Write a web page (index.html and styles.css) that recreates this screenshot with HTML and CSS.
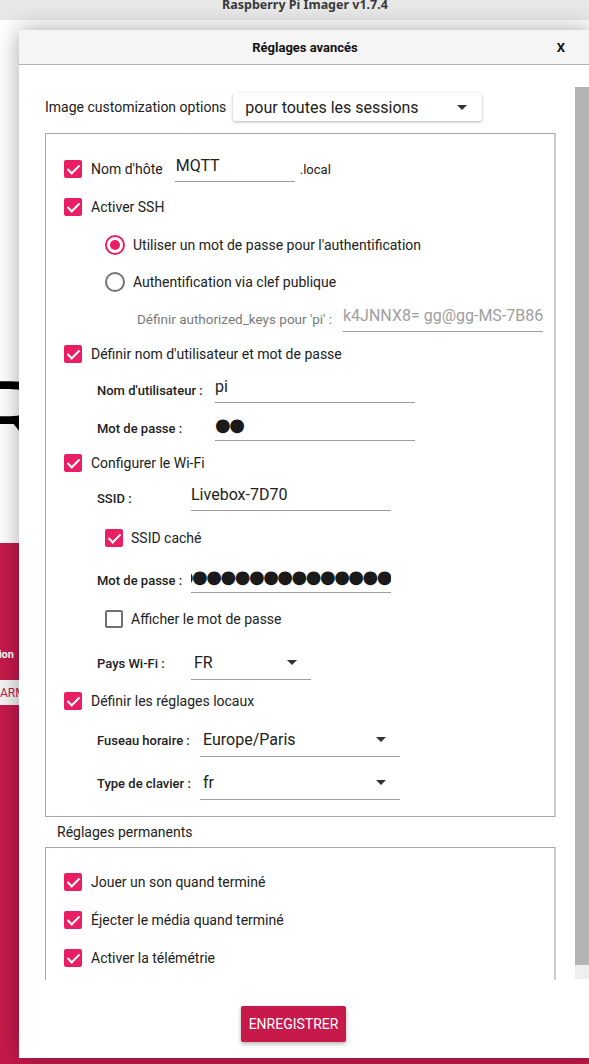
FILE: index.html
```html
<!DOCTYPE html>
<html lang="fr">
<head>
  <meta charset="UTF-8">
  <title>Raspberry Pi Imager v1.7.4</title>
  <meta name="viewport" content="width=device-width, initial-scale=1">
  <link rel="stylesheet" href="styles.css">
</head>
<body>
  <!-- main window, mostly hidden behind the settings dialog -->
  <div class="window">
    <div class="titlebar">Raspberry Pi Imager v1.7.4</div>
    <div class="main-top">
      <div class="logo">R</div>
    </div>
    <div class="main-bottom">
      <div class="step-col">
        <div class="step-label">Version</div>
        <button class="step-btn">ARMHF</button>
      </div>
    </div>
  </div>

  <div class="dialog">
    <div class="dialog-header">
      <span></span>
      <span class="dialog-title">Réglages avancés</span>
      <span class="dialog-close">X</span>
    </div>

    <div class="dialog-body">
      <div class="scroll-content">
        <div class="options-row">
          <span class="text">Image customization options</span>
          <div class="combo raised">
            <span>pour toutes les sessions</span>
            <i class="arrow"></i>
          </div>
        </div>

        <div class="group">
          <div class="row check-row h38">
            <span class="check"></span>
            <span class="text">Nom d'hôte</span>
            <div class="field host">MQTT</div>
            <span class="suffix">.local</span>
          </div>
          <div class="row check-row h38">
            <span class="check"></span>
            <span class="text">Activer SSH</span>
          </div>
          <div class="row radio-row h37">
            <span class="radio on"></span>
            <span class="text">Utiliser un mot de passe pour l'authentification</span>
          </div>
          <div class="row radio-row h38">
            <span class="radio"></span>
            <span class="text">Authentification via clef publique</span>
          </div>
          <div class="row keys-row h36">
            <span class="hint">Définir authorized_keys pour 'pi' :</span>
            <div class="field muted">k4JNNX8= gg@gg-MS-7B86</div>
          </div>

          <div class="row check-row h33">
            <span class="check"></span>
            <span class="text">Définir nom d'utilisateur et mot de passe</span>
          </div>
          <div class="creds">
            <div class="row sub-row h40">
              <span class="sublabel">Nom d'utilisateur :</span>
              <div class="field wide">pi</div>
            </div>
            <div class="row sub-row h36">
              <span class="sublabel">Mot de passe :</span>
              <div class="field wide dots">●●</div>
            </div>
          </div>

          <div class="row check-row h34">
            <span class="check"></span>
            <span class="text">Configurer le Wi-Fi</span>
          </div>
          <div class="wifi">
            <div class="row sub-row h36">
              <span class="sublabel">SSID :</span>
              <div class="field wide">Livebox-7D70</div>
            </div>
            <div class="row sub-check h44">
              <span class="check"></span>
              <span class="text">SSID caché</span>
            </div>
            <div class="row sub-row h40">
              <span class="sublabel">Mot de passe :</span>
              <div class="field wide dots tail"><span>●●●●●●●●●●●●●●●●●●●●●●</span></div>
            </div>
            <div class="row sub-check h38">
              <span class="check off"></span>
              <span class="text">Afficher le mot de passe</span>
            </div>
            <div class="row sub-row h50">
              <span class="sublabel">Pays Wi-Fi :</span>
              <div class="select short"><span>FR</span><i class="arrow"></i></div>
            </div>
          </div>

          <div class="row check-row h26">
            <span class="check"></span>
            <span class="text">Définir les réglages locaux</span>
          </div>
          <div class="locale">
            <div class="row sub-row h52">
              <span class="sublabel">Fuseau horaire :</span>
              <div class="select"><span>Europe/Paris</span><i class="arrow"></i></div>
            </div>
            <div class="row sub-row h34">
              <span class="sublabel">Type de clavier :</span>
              <div class="select"><span>fr</span><i class="arrow"></i></div>
            </div>
          </div>
        </div>

        <div class="section-label">Réglages permanents</div>
        <div class="group permanent">
          <div class="row check-row h38">
            <span class="check"></span>
            <span class="text">Jouer un son quand terminé</span>
          </div>
          <div class="row check-row h38">
            <span class="check"></span>
            <span class="text">Éjecter le média quand terminé</span>
          </div>
          <div class="row check-row h38">
            <span class="check"></span>
            <span class="text">Activer la télémétrie</span>
          </div>
        </div>
      </div>

      <div class="scrollbar">
        <div class="scroll-handle"></div>
        <div class="scroll-track"></div>
      </div>
    </div>

    <div class="dialog-footer">
      <button class="save-btn">ENREGISTRER</button>
    </div>
  </div>
</body>
</html>
```

FILE: styles.css
```css
* {
  box-sizing: border-box;
}

body {
  margin: 0;
  width: 589px;
  height: 1064px;
  overflow: hidden;
  position: relative;
  font-family: Roboto, 'Liberation Sans', sans-serif;
  color: #212121;
  background: #fff;
}

/* main window behind the dialog (wider than the viewport) */
.window {
  width: 610px;
  height: 1064px;
  display: flex;
  flex-direction: column;
}

.titlebar {
  height: 20px;
  background: #e8e8e8;
  color: #3a3a3a;
  font-family: 'Noto Sans', sans-serif;
  font-size: 12.5px;
  font-weight: bold;
  line-height: 10px;
  text-align: center;
}

.main-top {
  height: 523px;
  padding-top: 349px;
  background: #fff;
  overflow: hidden;
}

.logo {
  margin-left: -38px;
  font-size: 100px;
  font-weight: 400;
  line-height: 1;
  color: #000;
  transform: scaleX(1.5);
  transform-origin: left center;
}

.main-bottom {
  flex: 1;
  padding-top: 105px;
  background: #c51a4a;
}

.step-col {
  width: 14px;
  display: flex;
  flex-direction: column;
  align-items: flex-end;
}

.step-label {
  color: #fff;
  font-size: 11px;
  font-weight: bold;
  line-height: 14px;
  white-space: nowrap;
}

.step-btn {
  align-self: flex-start;
  margin: 18px 0 0 -8px;
  height: 25px;
  padding: 0 8px;
  border: none;
  background: #f4f4f4;
  color: #c51a4a;
  font-family: Roboto, sans-serif;
  font-size: 12px;
}

/* settings dialog */
.dialog {
  position: absolute;
  left: 19px;
  top: 30px;
  width: 572px;
  height: 1028px;
  background: #fff;
  box-shadow: 0 0 22px rgba(0, 0, 0, 0.35);
  display: flex;
  flex-direction: column;
}

.dialog-header {
  height: 35px;
  flex: none;
  display: grid;
  grid-template-columns: 1fr auto 1fr;
  align-items: center;
  background: #f5f5f5;
  border-bottom: 1px solid #b4b4b4;
  font-size: 13px;
  font-weight: bold;
  color: #111;
}

.dialog-close {
  justify-self: end;
  margin-right: 26px;
}

.dialog-body {
  height: 915px;
  flex: none;
  display: flex;
}

.scroll-content {
  flex: 1;
  overflow: hidden;
  padding: 28px 19px 0 26px;
}

.scrollbar {
  width: 14px;
  margin-right: 2px;
  padding-top: 22px;
}

.scroll-handle {
  height: 878px;
  background: #b4b4b4;
}

.scroll-track {
  height: 14px;
  background: #efefef;
}

.text {
  font-size: 14px;
  white-space: nowrap;
}

.options-row {
  height: 28px;
  display: flex;
  align-items: center;
  gap: 7px;
}

.combo {
  width: 249px;
  height: 28px;
  display: flex;
  align-items: center;
  justify-content: space-between;
  padding: 0 15px 0 12px;
  font-size: 16px;
}

.combo.raised {
  background: #fff;
  border-radius: 2px;
  box-shadow: 0 1px 3px rgba(0, 0, 0, 0.3);
}

.arrow {
  width: 0;
  height: 0;
  border-left: 5px solid transparent;
  border-right: 5px solid transparent;
  border-top: 5px solid #333;
}

.group {
  margin-top: 12px;
  padding: 16px 0;
  border: 1px solid #a6a6a6;
  border-right: 2px solid #cecece;
}

.group.permanent {
  margin-top: 0;
  padding-top: 15px;
  padding-bottom: 60px;
}

.section-label {
  height: 30px;
  display: flex;
  align-items: center;
  padding-left: 12px;
  font-size: 14px;
}

/* rows */
.row {
  display: flex;
  align-items: center;
}

.h26 { height: 26px; }
.h33 { height: 33px; }
.h34 { height: 34px; }
.h36 { height: 36px; }
.h37 { height: 37px; }
.h38 { height: 38px; }
.h40 { height: 40px; }
.h44 { height: 44px; }
.h50 { height: 50px; }
.h52 { height: 52px; }

.check-row {
  padding-left: 18px;
  gap: 9px;
}

.radio-row {
  padding-left: 59px;
  gap: 8px;
}

.sub-check {
  padding-left: 59px;
  gap: 8px;
}

.keys-row {
  padding-left: 91px;
}

.sub-row {
  padding-left: 51px;
}

.check {
  position: relative;
  width: 18px;
  height: 18px;
  flex: none;
  border-radius: 2px;
  background: #e91e63;
}

.check::after {
  content: '';
  position: absolute;
  left: 6px;
  top: 2px;
  width: 5px;
  height: 10px;
  border: solid #fff;
  border-width: 0 2.5px 2.5px 0;
  transform: rotate(45deg);
}

.check.off {
  background: none;
  border: 2px solid #707070;
}

.check.off::after {
  display: none;
}

.radio {
  width: 20px;
  height: 20px;
  flex: none;
  border-radius: 50%;
  border: 2px solid #737373;
  display: flex;
  align-items: center;
  justify-content: center;
}

.radio.on {
  border-color: #e91e63;
}

.radio.on::after {
  content: '';
  width: 10px;
  height: 10px;
  border-radius: 50%;
  background: #e91e63;
}

.hint {
  width: 206px;
  font-size: 13.5px;
  color: #7a7a7a;
  white-space: nowrap;
}

.sublabel {
  flex: none;
  font-size: 13px;
  font-weight: 500;
  white-space: nowrap;
}

.creds .sublabel { width: 118px; }
.wifi .sublabel { width: 94px; }
.locale .sublabel { width: 103px; }

/* text fields: text on top, underline below */
.field {
  height: 26px;
  padding-bottom: 6px;
  border-bottom: 1px solid #9e9e9e;
  font-size: 16px;
  line-height: 19px;
  white-space: nowrap;
  overflow: hidden;
  color: #222;
}

.field.host {
  width: 120px;
  margin-left: 3px;
  margin-right: -4px;
  padding-left: 1px;
}

.field.wide,
.field.muted {
  width: 200px;
}

.field.muted {
  color: #9e9e9e;
}

.field.dots {
  font-family: 'DejaVu Sans', sans-serif;
  font-size: 18px;
  letter-spacing: -1.5px;
  color: #1a1a1a;
}

.field.tail {
  display: flex;
  justify-content: flex-end;
}

.suffix {
  font-size: 13px;
}

.select {
  width: 200px;
  height: 34px;
  display: flex;
  align-items: center;
  justify-content: space-between;
  padding: 0 14px 0 3px;
  border-bottom: 1px solid #9e9e9e;
  font-size: 16px;
}

.select.short {
  width: 120px;
}

/* footer */
.dialog-footer {
  flex: 1;
  display: flex;
  align-items: flex-start;
  padding: 26px 0 0 222px;
}

.save-btn {
  width: 105px;
  height: 36px;
  border: none;
  border-radius: 2px;
  background: #c8194b;
  color: #fff;
  font-family: Roboto, sans-serif;
  font-size: 14px;
  box-shadow: 0 2px 4px rgba(0, 0, 0, 0.3);
}
```
